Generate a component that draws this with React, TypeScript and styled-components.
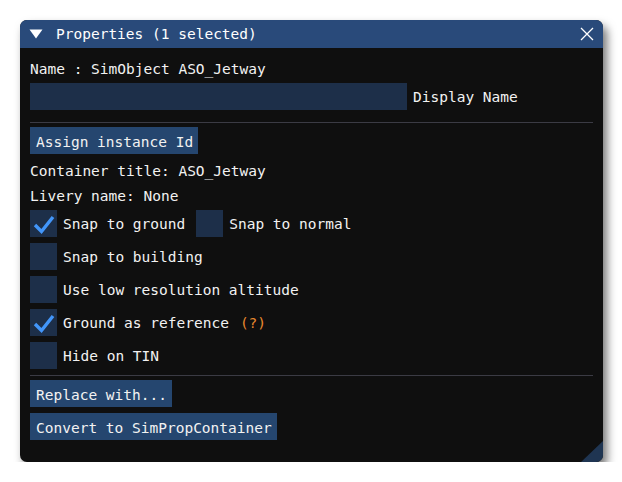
import * as React from "react";
import styled, { createGlobalStyle } from "styled-components";

const GlobalStyle = createGlobalStyle`
    html, body {
        margin: 0;
        background: #ffffff;
    }
    body {
        font-family: "DejaVu Sans Mono", "Liberation Mono", monospace;
        font-size: 14.5px;
    }
`;

const Page = styled.div`
    padding: 20px 0 0 20px;
`;

const Window = styled.div`
    position: relative;
    width: 583px;
    border-radius: 7px;
    overflow: hidden;
    background: #0f0f0f;
    box-shadow: 4px 6px 10px rgba(0, 0, 0, 0.55);
`;

const TitleBar = styled.div`
    display: flex;
    align-items: center;
    height: 28px;
    padding: 0 9px 0 9px;
    background: #294a7a;
    color: #ffffff;
    line-height: 31px;
`;

const Title = styled.span`
    flex: 1;
    margin-left: 13px;
`;

const Body = styled.div`
    display: flex;
    flex-direction: column;
    gap: 6px;
    padding: 10px 10px 22px 10px;
    color: #f2f2f2;
`;

const TextLine = styled.div`
    height: 19px;
    line-height: 23px;
    white-space: pre;
`;

const Row = styled.div`
    display: flex;
    align-items: center;
    height: 27px;
`;

const Input = styled.div`
    width: 377px;
    height: 27px;
    background: #1d2f49;
`;

const Label = styled.span<{ $gap?: number }>`
    margin-left: ${p => p.$gap ?? 6}px;
    line-height: 32px;
    white-space: pre;
`;

const Hint = styled.span`
    margin-left: 11px;
    color: #e8892e;
    line-height: 32px;
`;

const Separator = styled.div<{ $top: number }>`
    height: 1px;
    margin: ${p => p.$top}px 0 -2px;
    background: #3b3b44;
`;

const Button = styled.div`
    align-self: flex-start;
    height: 27px;
    padding: 0 5px 0 6px;
    background: #25466f;
    line-height: 30px;
    white-space: pre;
`;

const Box = styled.div<{ $gap?: number }>`
    display: flex;
    align-items: center;
    justify-content: center;
    flex: none;
    width: 27px;
    height: 27px;
    margin-left: ${p => p.$gap ?? 0}px;
    background: #1d2f49;
`;

const Grip = styled.div`
    position: absolute;
    right: 0;
    bottom: 0;
    width: 22px;
    height: 21px;
    background: #1f3552;
    clip-path: polygon(100% 0, 100% 100%, 0 100%);
`;

const Check = () => (
    <svg width="27" height="27" viewBox="0 0 27 27">
        <polyline points="5,15 11.5,21.5 23,7" fill="none" stroke="#4296fa" strokeWidth="3.4" strokeLinejoin="miter" />
    </svg>
);

const Checkbox = ({ checked, gap }: { checked?: boolean; gap?: number }) => (
    <Box $gap={gap}>{checked && <Check />}</Box>
);

const options = [
    { label: "Snap to building", checked: false },
    { label: "Use low resolution altitude", checked: false },
    { label: "Ground as reference", checked: true, hint: true },
    { label: "Hide on TIN", checked: false },
];

const App = () => {
    return (
        <Page>
            <GlobalStyle />
            <Window>
                <TitleBar>
                    <svg width="14" height="10" viewBox="0 0 14 10">
                        <polygon points="0.5,0.5 13.5,0.5 7,9.5" fill="#ffffff" />
                    </svg>
                    <Title>Properties (1 selected)</Title>
                    <svg width="14" height="14" viewBox="0 0 14 14">
                        <path d="M1 1 L13 13 M13 1 L1 13" stroke="#ffffff" strokeWidth="1.3" />
                    </svg>
                </TitleBar>
                <Body>
                    <TextLine>Name : SimObject ASO_Jetway</TextLine>
                    <Row>
                        <Input />
                        <Label>Display Name</Label>
                    </Row>
                    <Separator $top={6} />
                    <Button>Assign instance Id</Button>
                    <TextLine>Container title: ASO_Jetway</TextLine>
                    <TextLine>Livery name: None</TextLine>
                    <Row>
                        <Checkbox checked />
                        <Label>Snap to ground</Label>
                        <Checkbox gap={11} />
                        <Label>Snap to normal</Label>
                    </Row>
                    {options.map(option => (
                        <Row key={option.label}>
                            <Checkbox checked={option.checked} />
                            <Label>{option.label}</Label>
                            {option.hint && <Hint>(?)</Hint>}
                        </Row>
                    ))}
                    <Separator $top={0} />
                    <Button>Replace with...</Button>
                    <Button>Convert to SimPropContainer</Button>
                </Body>
                <Grip />
            </Window>
        </Page>
    );
};

export default App;
